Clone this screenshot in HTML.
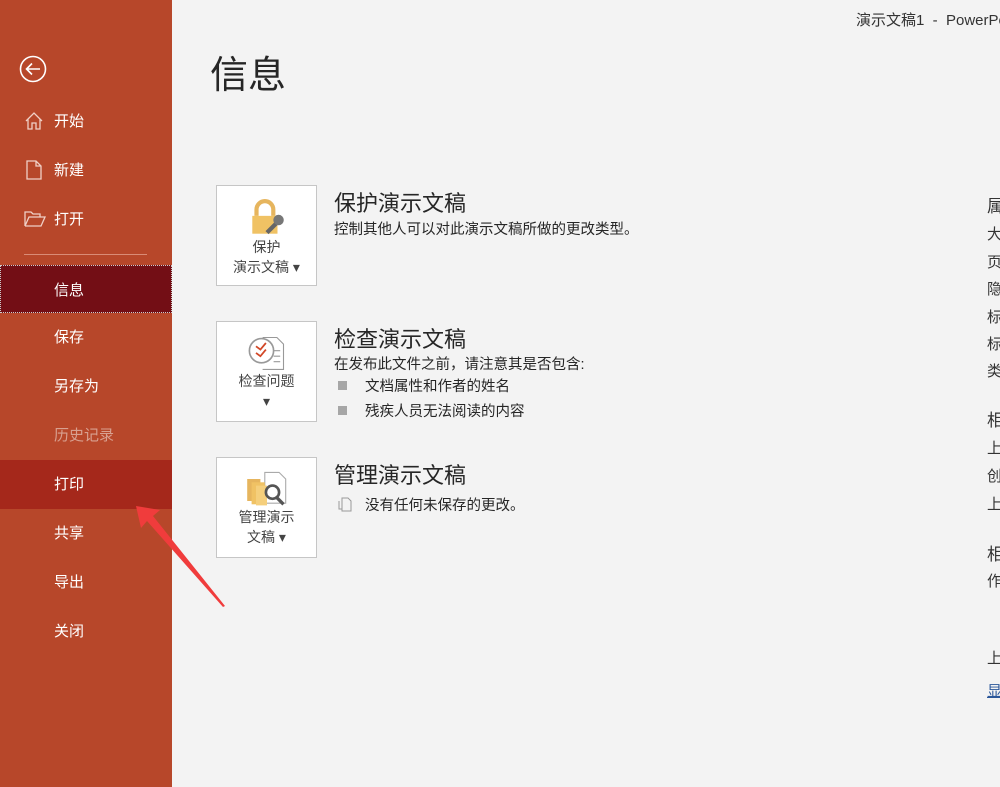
<!DOCTYPE html>
<html><head><meta charset="utf-8"><style>
*{margin:0;padding:0;box-sizing:border-box}
body{width:1000px;height:787px;overflow:hidden;background:#f3f3f3;font-family:"Liberation Sans","Noto Sans CJK SC",sans-serif;position:relative;color:#262626}
.side{position:absolute;left:0;top:0;width:172px;height:787px;background:#b7472a}
.it{position:absolute;left:0;width:172px;height:49px;color:#fff;font-size:15px;line-height:49px;padding-left:54px}
.a{position:absolute}
.box{position:absolute;left:216px;width:101px;height:101px;background:#fff;border:1px solid #c6c6c6;text-align:center;font-size:14px;color:#444;line-height:20px}
h2{position:absolute;left:334px;font-size:22px;font-weight:normal;color:#262626}
.t{position:absolute;font-size:14.5px;color:#262626;white-space:nowrap}
.r{position:absolute;left:987px;font-size:15px;color:#333;width:13px;overflow:hidden;white-space:nowrap}
.sq{display:inline-block;width:9px;height:9px;background:#a6a6a6;margin-right:18px;vertical-align:1px;margin-left:4px}
</style></head><body>
<div class="side">
<svg class="a" style="left:19px;top:55px" width="28" height="28" viewBox="0 0 28 28"><circle cx="14" cy="14" r="12.5" fill="none" stroke="#fff" stroke-width="1.6"/><path d="M21 14H8M13 8.5 7.5 14 13 19.5" fill="none" stroke="#fff" stroke-width="1.6"/></svg>
<svg class="a" style="left:24px;top:111px" width="20" height="20" viewBox="0 0 20 20"><path d="M2 10 10 2 18 10M4 8V18H8V12H12V18H16V8" fill="none" stroke="#f0d0c6" stroke-width="1.3"/></svg>
<div class="it" style="top:97px">开始</div>
<svg class="a" style="left:26px;top:160px" width="16" height="20" viewBox="0 0 16 20"><path d="M1 1H10L15 6V19H1Z M10 1V6H15" fill="none" stroke="#f0d0c6" stroke-width="1.3"/></svg>
<div class="it" style="top:146px">新建</div>
<svg class="a" style="left:24px;top:211px" width="22" height="16" viewBox="0 0 22 16"><path d="M1 15V1H7L9 3H16V6M1 15H17L21 6H5L1 15" fill="none" stroke="#f0d0c6" stroke-width="1.3"/></svg>
<div class="it" style="top:195px">打开</div>
<div class="a" style="left:24px;top:254px;width:123px;height:1px;background:#d98b76"></div>
<div class="it" style="top:265px;height:48px;background:#730e15;border:1px dotted #ccc;padding-left:53px">信息</div>
<div class="it" style="top:313px">保存</div>
<div class="it" style="top:362px">另存为</div>
<div class="it" style="top:411px;color:#d8a090">历史记录</div>
<div class="it" style="top:460px;background:#a5281b">打印</div>
<div class="it" style="top:509px">共享</div>
<div class="it" style="top:558px">导出</div>
<div class="it" style="top:607px">关闭</div>
</div>
<svg class="a" style="left:130px;top:500px" width="100" height="110" viewBox="0 0 100 110"><polygon points="6,6 30,10 23,16 95,106 93,107 17,21 11,28" fill="#f03c3c"/></svg>
<div class="t" style="left:856px;top:9px;font-size:15px;color:#333">演示文稿1&nbsp; - &nbsp;PowerPoint</div>
<div class="t" style="left:210px;top:44px;font-size:38px;color:#262626">信息</div>

<div class="box" style="top:185px"><svg style="margin-top:12px" width="44" height="42" viewBox="0 0 40 40"><path d="M10 17V11a8 8 0 0 1 16 0v6" fill="none" stroke="#e6b55e" stroke-width="4"/><rect x="6" y="17" width="24" height="17" fill="#f0c264"/><path d="M20 33l10-10" stroke="#666" stroke-width="4"/><circle cx="31" cy="21" r="5" fill="#777"/></svg><br><span style="position:relative;top:-8px">保护<br>演示文稿 ▾</span></div>
<h2 style="top:186px">保护演示文稿</h2>
<div class="t" style="left:334px;top:218px">控制其他人可以对此演示文稿所做的更改类型。</div>

<div class="box" style="top:321px"><svg style="margin-top:12px" width="44" height="40" viewBox="0 0 40 36"><path d="M16 3H29L35 9V32H16" fill="#fff" stroke="#999"/><circle cx="15" cy="15" r="11" fill="#fff" stroke="#999" stroke-width="1.5"/><path d="M10 11l4 3 5-6M10 17l4 3 5-6" fill="none" stroke="#d24726" stroke-width="1.6"/><path d="M26 15h6M26 20h6M26 25h6" stroke="#999"/></svg><br><span style="position:relative;top:-8px">检查问题<br>▾</span></div>
<h2 style="top:322px">检查演示文稿</h2>
<div class="t" style="left:334px;top:353px">在发布此文件之前，请注意其是否包含:</div>
<div class="t" style="left:334px;top:375px"><span class="sq"></span>文档属性和作者的姓名</div>
<div class="t" style="left:334px;top:400px"><span class="sq"></span>残疾人员无法阅读的内容</div>

<div class="box" style="top:457px"><svg style="margin-top:12px" width="44" height="40" viewBox="0 0 40 36"><path d="M18 2H31L37 8V30H18Z" fill="#fff" stroke="#aaa"/><rect x="2" y="8" width="12" height="20" fill="#e6b55e"/><rect x="6" y="11" width="12" height="20" fill="#f0c264"/><rect x="10" y="14" width="10" height="18" fill="#f5cf7c"/><circle cx="25" cy="20" r="6" fill="#fff" stroke="#555" stroke-width="2.4"/><path d="M29 25l6 6" stroke="#555" stroke-width="3"/></svg><br><span style="position:relative;top:-8px">管理演示<br>文稿 ▾</span></div>
<h2 style="top:458px">管理演示文稿</h2>
<svg class="a" style="left:337px;top:496px" width="16" height="16" viewBox="0 0 16 16"><path d="M5 2H11L14 5V15H5Z M2 5V13H5" fill="none" stroke="#999"/></svg>
<div class="t" style="left:365px;top:494px">没有任何未保存的更改。</div>

<div class="r" style="top:192px;font-size:17px">属性</div>
<div class="r" style="top:223px">大小</div>
<div class="r" style="top:251px">页数</div>
<div class="r" style="top:278px">隐藏</div>
<div class="r" style="top:306px">标题</div>
<div class="r" style="top:333px">标记</div>
<div class="r" style="top:360px">类别</div>
<div class="r" style="top:406px;font-size:17px">相关</div>
<div class="r" style="top:437px">上次</div>
<div class="r" style="top:465px">创建</div>
<div class="r" style="top:493px">上次</div>
<div class="r" style="top:540px;font-size:17px">相关</div>
<div class="r" style="top:570px">作者</div>
<div class="r" style="top:647px">上次</div>
<div class="r" style="top:680px;color:#2b579a;text-decoration:underline">显示</div>
</body></html>
